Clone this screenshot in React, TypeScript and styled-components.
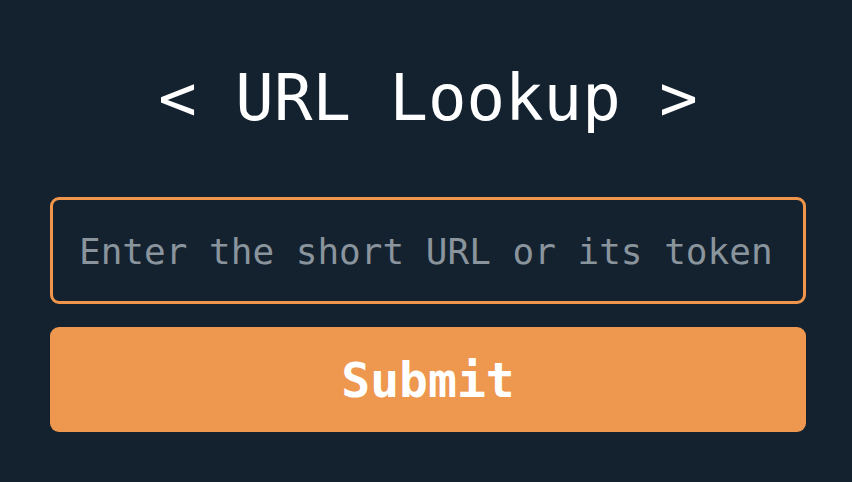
import React from 'react';
import styled, {createGlobalStyle} from 'styled-components';

const GlobalStyle = createGlobalStyle`
    html, body {
        margin: 0;
        padding: 0;
        background: #142230;
    }

    body {
        font-family: "DejaVu Sans Mono", "Liberation Mono", monospace;
    }
`;

const Page = styled.main`
    display: flex;
    flex-direction: column;
    min-height: 482px;
    padding: 66px 46px 0 50px;
    box-sizing: border-box;
`;

const Title = styled.h1`
    margin: 0 0 67px;
    font-size: 64px;
    line-height: 64px;
    font-weight: 400;
    color: #ffffff;
    text-align: center;
    white-space: pre;
`;

const Form = styled.form`
    display: flex;
    flex-direction: column;
    gap: 23px;
`;

const TokenInput = styled.input`
    box-sizing: border-box;
    height: 107px;
    width: 100%;
    padding: 2px 26px 0;
    border: 3px solid #f0954a;
    border-radius: 9px;
    background: #142230;
    color: #ffffff;
    font-family: inherit;
    font-size: 36px;
    outline: none;

    &::placeholder {
        color: #8a949c;
    }
`;

const SubmitButton = styled.button`
    height: 105px;
    width: 100%;
    border: none;
    border-radius: 9px;
    background: #ee974f;
    color: #ffffff;
    font-family: inherit;
    font-size: 48px;
    font-weight: 700;
    cursor: pointer;
`;

const App = () => {
    return (
        <>
            <GlobalStyle/>
            <Page>
                <Title>{'< URL Lookup >'}</Title>
                <Form onSubmit={(e) => e.preventDefault()}>
                    <TokenInput placeholder='Enter the short URL or its token'/>
                    <SubmitButton type='submit'>{'Submit'}</SubmitButton>
                </Form>
            </Page>
        </>
    );
};

export default App;
